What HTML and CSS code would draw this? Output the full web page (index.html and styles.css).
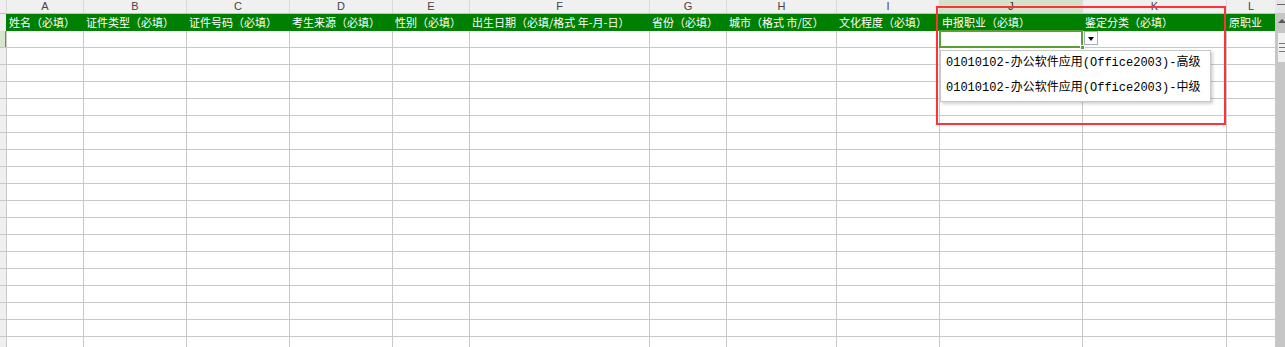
FILE: index.html
```html
<!DOCTYPE html>
<html lang="zh-CN">
<head>
    <meta charset="UTF-8">
    <meta name="viewport" content="width=device-width, initial-scale=1.0">
    <title>报名表</title>
    <link rel="stylesheet" href="styles.css">
</head>
<body>

    <div class="app">
        <div class="sheet">
            <div class="row head">
                <div class="num"></div>
                <div>A</div><div>B</div><div>C</div><div>D</div><div>E</div><div>F</div>
                <div>G</div><div>H</div><div>I</div><div class="on">J</div><div>K</div><div>L</div>
            </div>
            <div class="row title">
                <div class="num"></div>
                <div>姓名（必填）</div>
                <div>证件类型（必填）</div>
                <div>证件号码（必填）</div>
                <div>考生来源（必填）</div>
                <div>性别（必填）</div>
                <div>出生日期（必填/格式 年-月-日）</div>
                <div>省份（必填）</div>
                <div>城市（格式 市/区）</div>
                <div>文化程度（必填）</div>
                <div>申报职业（必填）</div>
                <div>鉴定分类（必填）</div>
                <div>原职业</div>
            </div>
            <div class="row">
                <div class="num cur"></div>
                <div></div><div></div><div></div><div></div><div></div><div></div>
                <div></div><div></div><div></div>
                <div class="active">
                    <span class="handle"></span>
                    <span class="drop-btn"></span>
                    <ul class="drop-list">
                        <li>01010102-办公软件应用(Office2003)-高级</li>
                        <li>01010102-办公软件应用(Office2003)-中级</li>
                    </ul>
                </div>
                <div></div><div></div>
            </div>
            <div id="rows"></div>
        </div>

        <div class="scroll">
            <div class="scroll-top"></div>
            <div class="scroll-up"></div>
            <div class="scroll-thumb"><i></i><i></i><i></i></div>
        </div>

        <div class="mark"></div>
    </div>

    <script>
        const rows = document.getElementById("rows");
        for (let i = 0; i < 19; i++) {
            const row = document.createElement("div");
            row.className = "row";
            row.innerHTML = '<div class="num"></div>' + '<div></div>'.repeat(12);
            rows.appendChild(row);
        }
    </script>

</body>
</html>
```

FILE: styles.css
```css
body {
    margin: 0;
    font-family: "Liberation Sans", "Noto Sans CJK SC", sans-serif;
    background: #fff;
    overflow: hidden;
}
.app {
    display: flex;
    height: 347px;
    position: relative;
    overflow: hidden;
}
.sheet {
    width: 1275px;
    flex: none;
}
.row {
    display: grid;
    grid-template-columns: 6px 76px 102px 102px 102px 76px 179px 76px 109px 102px 142px 143px 48px;
    column-gap: 1px;
    height: 16px;
    background: #c8c8c8;
    border-bottom: 1px solid #c8c8c8;
}
.row > div {
    background: #fff;
}
.row > .num {
    background: #efefef;
}
.row > .num.cur {
    background: #d6e6cd;
    box-shadow: inset -1px 0 #5c9f35;
}
.head {
    height: 13px;
    background: #d9d9d9;
    border-bottom-color: #c0c0c0;
}
.head > div {
    background: #f0f0f0;
    color: #444;
    font-size: 11px;
    line-height: 13px;
    text-align: center;
}
.head > .on {
    background: #d3e3cb;
    color: #333;
}
.title {
    height: 17px;
    background: #008000;
    border-bottom: 0;
}
.title > div {
    background: transparent;
    color: #fff;
    font-family: "Noto Sans CJK SC", sans-serif;
    font-size: 11px;
    line-height: 17px;
    padding-left: 2px;
    white-space: nowrap;
    overflow: hidden;
}
.active {
    position: relative;
}
.active::after {
    content: "";
    position: absolute;
    top: -1px;
    left: -1px;
    right: -1px;
    bottom: -1px;
    border: 2px solid #5c9f35;
}
.handle {
    position: absolute;
    right: -3px;
    bottom: -3px;
    width: 5px;
    height: 5px;
    background: #5c9f35;
    border: 1px solid #fff;
    box-sizing: border-box;
    z-index: 2;
}
.drop-btn {
    position: absolute;
    top: 0;
    left: calc(100% + 2px);
    width: 14px;
    height: 14px;
    box-sizing: border-box;
    background: #fff;
    border: 1px solid #9fb0c2;
    z-index: 2;
}
.drop-btn::after {
    content: "";
    position: absolute;
    left: 3px;
    top: 5px;
    border-left: 3px solid transparent;
    border-right: 3px solid transparent;
    border-top: 4px solid #000;
}
.drop-list {
    position: absolute;
    top: 19px;
    left: 0;
    width: 269px;
    margin: 0;
    padding: 0;
    list-style: none;
    background: #fff;
    border: 1px solid #c8c8c8;
    box-shadow: 2px 2px 3px rgba(0, 0, 0, 0.18);
    z-index: 3;
}
.drop-list li {
    height: 25px;
    line-height: 25px;
    padding-left: 5px;
    font-family: "Liberation Mono", "Noto Sans CJK SC", monospace;
    font-size: 12px;
    color: #000;
    white-space: nowrap;
}
.scroll {
    flex: 1;
    background: #c6c6c6;
    position: relative;
}
.scroll-top {
    height: 13px;
    background: #e6e6e6;
    position: relative;
}
.scroll-top::after {
    content: "";
    position: absolute;
    left: 2px;
    right: 0;
    top: 4px;
    height: 1px;
    background: #666;
}
.scroll-up {
    width: 0;
    margin: 6px 0 0 3px;
    border-left: 4px solid transparent;
    border-right: 4px solid transparent;
    border-bottom: 4px solid #555;
}
.scroll-thumb {
    margin: 10px 0 0 3px;
    height: 29px;
    background: #f0f0f0;
    display: flex;
    flex-direction: column;
    gap: 3px;
    padding: 10px 0 0 1px;
    box-sizing: border-box;
}
.scroll-thumb i {
    display: block;
    height: 1px;
    width: 6px;
    background: #777;
}
.mark {
    position: absolute;
    left: 936px;
    top: 6px;
    width: 290px;
    height: 119px;
    box-sizing: border-box;
    border: 2px solid #f33;
    pointer-events: none;
    z-index: 4;
}
```
